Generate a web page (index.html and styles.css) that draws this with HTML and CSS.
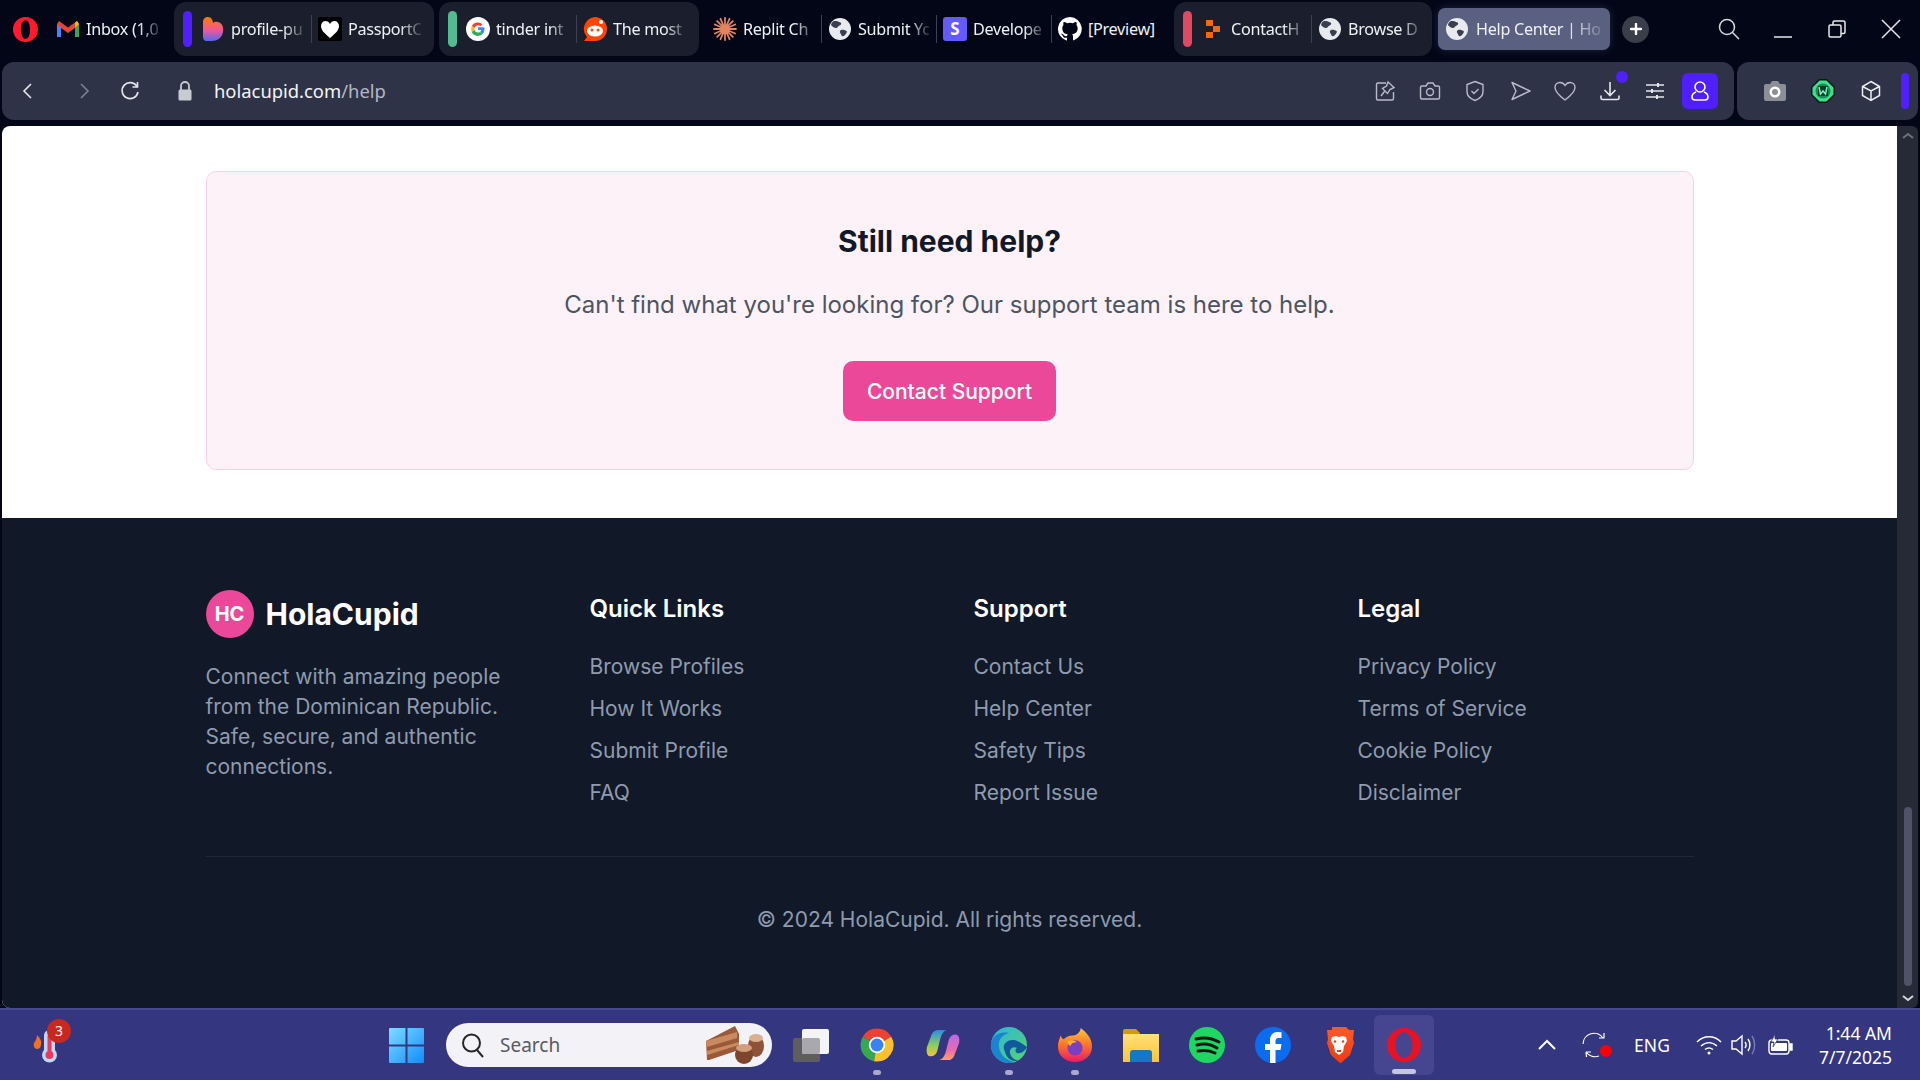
FILE: index.html
```html
<!DOCTYPE html>
<html lang="en">
<head>
<meta charset="utf-8">
<title>Help Center | HolaCupid</title>
<link rel="stylesheet" href="styles.css">
</head>
<body>
<svg class="defs" width="0" height="0">
  <defs>
    <symbol id="globe" viewBox="0 0 24 24">
      <circle cx="12" cy="12" r="11" fill="#e8eaf0"/>
      <path d="M5 4.500c3-1 5 0 7.500 1 1.500.8.500 2.500-1 3-2 .7-1.500 2.500-3.500 2.500S4 9 3 8c.3-1.500 1-2.600 2-3.500zM13 13c2-.8 4 0 5.500 1 1 .8-.5 3-2 4.500-1 1-2.500 1-3 0-.5-1.500-1-2-1.500-3-.3-1 0-2 1-2.500z" fill="#3a3f4f"/>
    </symbol>
    <linearGradient id="gSlack" x1="0" y1="0" x2="0" y2="1"><stop offset="0" stop-color="#ff7a00"/><stop offset=".55" stop-color="#f0569a"/><stop offset="1" stop-color="#4f6bf0"/></linearGradient>
    <linearGradient id="gWin" x1="0" y1="0" x2="1" y2="1"><stop offset="0" stop-color="#7fdcff"/><stop offset="1" stop-color="#0f8cff"/></linearGradient>
    <linearGradient id="gEdge" x1="0" y1="0" x2="1" y2="1"><stop offset="0" stop-color="#2bb6dd"/><stop offset="1" stop-color="#58d46a"/></linearGradient>
    <linearGradient id="gFire" x1="0" y1="0" x2="0" y2="1"><stop offset="0" stop-color="#ffc83a"/><stop offset=".55" stop-color="#ff6a2a"/><stop offset="1" stop-color="#e8186e"/></linearGradient>
    <linearGradient id="gCopA" x1="0" y1="0" x2="0" y2="1"><stop offset="0" stop-color="#2a8bea"/><stop offset=".6" stop-color="#8fd05a"/><stop offset="1" stop-color="#f5c22e"/></linearGradient>
    <linearGradient id="gCopB" x1="0" y1="0" x2="0" y2="1"><stop offset="0" stop-color="#b36be8"/><stop offset=".6" stop-color="#e96ab0"/><stop offset="1" stop-color="#ffa25a"/></linearGradient>
    <linearGradient id="gFold" x1="0" y1="0" x2="0" y2="1"><stop offset="0" stop-color="#ffe07a"/><stop offset="1" stop-color="#fbc530"/></linearGradient>
    <linearGradient id="gBrave" x1="0" y1="0" x2="0" y2="1"><stop offset="0" stop-color="#ff5a2a"/><stop offset="1" stop-color="#f03a10"/></linearGradient>
  </defs>
</svg>

<header class="tabbar">
  <svg class="opera-logo" width="25" height="25" viewBox="0 0 24 24"><path fill-rule="evenodd" d="M12 0C5 0 0 5.400 0 12s5 12 12 12 12-5.400 12-12S19 0 12 0zm0 3c2.700 0 4.400 4 4.400 9S14.700 21 12 21s-4.400-4-4.400-9S9.300 3 12 3z" fill="#ff1b2d"/></svg>
  <div class="tab tab-inbox">
    <svg class="fav" width="22" height="16" viewBox="0 0 22 16"><path d="M0 3v13h4V7l7 5 7-5v9h4V3l-2-3-9 6.500L2 0z" fill="#ea4335"/><path d="M0 3v13h4V7z" fill="#4285f4"/><path d="M18 7v9h4V3z" fill="#34a853"/><path d="M22 3l-2-3-2 1.500V7z" fill="#fbbc04"/></svg>
    <span class="tab-text">Inbox (1,0</span>
  </div>

  <div class="group">
    <i class="pill pill-violet"></i>
    <div class="tab">
      <svg class="fav" width="24" height="24" viewBox="0 0 24 24"><path d="M2 5c0-3 2-5 5-5s5 3 5 6c1-1 3-1.500 5-1 4 1 6 5 5 10-1 6-6 9-11 9H6c-3 0-4-2-4-5z" fill="url(#gSlack)"/></svg>
      <span class="tab-text">profile-pu</span>
    </div>
    <i class="sep"></i>
    <div class="tab">
      <svg class="fav" width="24" height="24" viewBox="0 0 24 24"><rect width="24" height="24" rx="2" fill="#000"/><path d="M12 21C6 16 3 13 3 9c0-3 2-5 4.500-5 2 0 3.500 1 4.500 3 1-2 2.500-3 4.500-3C19 4 21 6 21 9c0 4-3 7-9 12z" fill="#fff"/></svg>
      <span class="tab-text">PassportC</span>
    </div>
  </div>

  <div class="group">
    <i class="pill pill-green"></i>
    <div class="tab">
      <svg class="fav" width="24" height="24" viewBox="0 0 24 24"><circle cx="12" cy="12" r="12" fill="#fff"/><path d="M12 5.500a6.500 6.500 0 0 1 4.400 1.700l-2 2A3.700 3.700 0 0 0 8.500 11L5.800 9A6.500 6.500 0 0 1 12 5.500z" fill="#ea4335"/><path d="M5.800 9l2.700 2a3.800 3.800 0 0 0 0 2.200L5.800 15a6.800 6.800 0 0 1 0-6z" fill="#fbbc04"/><path d="M5.800 15l2.700-1.900A3.700 3.700 0 0 0 14 14.900l2.500 2A6.500 6.500 0 0 1 5.800 15z" fill="#34a853"/><path d="M18.500 12c0 2-.8 3.700-2 4.900l-2.500-2c.7-.5 1.100-1.100 1.300-1.900H12v-2.700h6.300c.1.500.2 1.100.2 1.700z" fill="#4285f4"/></svg>
      <span class="tab-text">tinder int</span>
    </div>
    <i class="sep"></i>
    <div class="tab">
      <svg class="fav" width="24" height="24" viewBox="0 0 24 24"><path d="M12 0a12 12 0 0 1 12 12 12 12 0 0 1-12 12H1l3-4A12 12 0 0 1 12 0z" fill="#ff4500"/><ellipse cx="12" cy="14" rx="8" ry="5.500" fill="#fff"/><circle cx="9" cy="13" r="1.500" fill="#ff4500"/><circle cx="15" cy="13" r="1.500" fill="#ff4500"/><circle cx="18" cy="5" r="2" fill="#fff"/></svg>
      <span class="tab-text">The most</span>
    </div>
  </div>

  <div class="loose">
    <div class="tab tab-s">
      <svg class="fav" width="24" height="24" viewBox="0 0 24 24"><g stroke="#e2855f" stroke-width="1.800" stroke-linecap="round"><path d="M12 1v22M1 12h22M4.200 4.200l15.600 15.600M19.800 4.200L4.200 19.800M7.500 1.800l9 20.400M16.500 1.800l-9 20.400M1.800 7.500l20.400 9M22.200 7.500l-20.400 9"/></g></svg>
      <span class="tab-text">Replit Ch</span>
    </div>
    <i class="sep"></i>
    <div class="tab tab-s">
      <svg class="fav" width="24" height="24"><use href="#globe"/></svg>
      <span class="tab-text">Submit Yo</span>
    </div>
    <i class="sep"></i>
    <div class="tab tab-s">
      <span class="stripe">S</span>
      <span class="tab-text">Develope</span>
    </div>
    <i class="sep"></i>
    <div class="tab tab-s">
      <svg class="fav" width="24" height="24" viewBox="0 0 16 16"><path fill="#fff" d="M8 0a8 8 0 0 0-2.500 15.600c.4.100.5-.2.500-.4v-1.400c-2.200.5-2.700-1-2.700-1-.4-.9-.9-1.200-.9-1.200-.7-.5.100-.5.100-.5.800.100 1.200.8 1.200.8.700 1.200 1.900.9 2.300.7.100-.5.300-.9.500-1.100-1.800-.2-3.600-.9-3.600-4 0-.9.300-1.600.8-2.100-.1-.2-.4-1 .1-2.100 0 0 .7-.2 2.200.8a7.500 7.500 0 0 1 4 0c1.500-1 2.200-.8 2.200-.8.400 1.100.2 1.900.1 2.100.5.600.8 1.300.8 2.100 0 3.100-1.900 3.700-3.700 3.900.3.300.6.800.6 1.500v2.200c0 .2.100.5.600.4A8 8 0 0 0 8 0z"/></svg>
      <span class="tab-text tab-text-full">[Preview]</span>
    </div>
  </div>

  <div class="group group-last">
    <i class="pill pill-red"></i>
    <div class="tab">
      <svg class="fav" width="24" height="24" viewBox="0 0 24 24"><path d="M5 3h7v6H5zM12 9h7v6h-7zM5 15h7v6H5z" fill="#f26a0d"/></svg>
      <span class="tab-text">ContactH</span>
    </div>
    <i class="sep"></i>
    <div class="tab">
      <svg class="fav" width="24" height="24"><use href="#globe"/></svg>
      <span class="tab-text">Browse D</span>
    </div>
  </div>

  <div class="tab-active">
    <svg class="fav" width="24" height="24"><use href="#globe"/></svg>
    <span class="tab-text">Help Center | Ho</span>
  </div>
  <div class="plus"><svg width="12" height="12" viewBox="0 0 12 12"><path d="M6 1v10M1 6h10" stroke="#fff" stroke-width="2.400" stroke-linecap="round"/></svg></div>

  <div class="winctl">
    <svg width="24" height="24" viewBox="0 0 24 24" fill="none" stroke="#d8d9de" stroke-width="1.500"><circle cx="10" cy="10" r="7.500"/><path d="M15.500 15.500L22 22"/></svg>
    <svg width="24" height="24" viewBox="0 0 24 24" fill="none" stroke="#e8e8ec" stroke-width="1.500"><path d="M3 20h18"/></svg>
    <svg width="24" height="24" viewBox="0 0 24 24" fill="none" stroke="#e8e8ec" stroke-width="1.500"><rect x="4" y="8" width="12" height="12" rx="1.500"/><path d="M8 8V5.500C8 4.700 8.700 4 9.500 4h9c.8 0 1.500.7 1.500 1.500V15c0 .8-.7 1.500-1.500 1.500H16"/></svg>
    <svg width="24" height="24" viewBox="0 0 24 24" fill="none" stroke="#e8e8ec" stroke-width="1.500"><path d="M3 3l18 18M21 3L3 21"/></svg>
  </div>
</header>

<div class="addr-row">
  <div class="addr">
    <svg class="nav nav-back" width="24" height="24" viewBox="0 0 24 24" fill="none" stroke="#e6e7ec" stroke-width="1.600"><path d="M15 5l-7 7 7 7"/></svg>
    <svg class="nav nav-fwd" width="24" height="24" viewBox="0 0 24 24" fill="none" stroke="#7d8193" stroke-width="1.600"><path d="M9 5l7 7-7 7"/></svg>
    <svg class="nav nav-reload" width="24" height="24" viewBox="0 0 24 24" fill="none" stroke="#e6e7ec" stroke-width="1.600"><path d="M19 7.500A8 8 0 1 0 20 13"/><path d="M19.500 3v5h-5"/></svg>
    <svg class="nav nav-lock" width="24" height="24" viewBox="0 0 24 24"><path d="M8 11V7a4 4 0 0 1 8 0v4" fill="none" stroke="#c9cbd2" stroke-width="1.800"/><rect x="5.500" y="10.500" width="13" height="11" rx="1.500" fill="#c9cbd2"/></svg>
    <div class="url">holacupid.com<span class="url-path">/help</span></div>
    <div class="actions">
      <svg width="24" height="24" viewBox="0 0 24 24" fill="none" stroke="#b9bcc8" stroke-width="1.400"><path d="M13 4H5a1.500 1.500 0 0 0-1.500 1.500v14A1.500 1.500 0 0 0 5 21h14a1.500 1.500 0 0 0 1.500-1.500V13"/><path d="M15 3l6 5.500-4 2-2.500 4-5-5 4-2.500zM11.500 12.500L8 17"/></svg>
      <svg width="24" height="24" viewBox="0 0 24 24" fill="none" stroke="#b9bcc8" stroke-width="1.400"><path d="M4 7h4l2-3h5l2 3h3a1.500 1.500 0 0 1 1.500 1.500v10A1.500 1.500 0 0 1 20 20H4a1.500 1.500 0 0 1-1.500-1.500v-10A1.500 1.500 0 0 1 4 7z"/><circle cx="12" cy="13" r="3.500"/></svg>
      <svg width="24" height="24" viewBox="0 0 24 24" fill="none" stroke="#b9bcc8" stroke-width="1.400"><path d="M12 2.500l8 3v7c0 4.500-3.500 7.500-8 9-4.500-1.500-8-4.500-8-9v-7z"/><path d="M8.500 12l2.500 2.500 4.500-4.500"/></svg>
      <svg width="24" height="24" viewBox="0 0 24 24" fill="none" stroke="#b9bcc8" stroke-width="1.400"><path d="M4 3.500L22 12 4 20.500 8 12z" stroke-linejoin="round"/></svg>
      <svg width="24" height="24" viewBox="0 0 24 24" fill="none" stroke="#b9bcc8" stroke-width="1.400"><path d="M12 21C6 16.500 2 13 2 8.500 2 5.500 4.300 3.500 7 3.500c2 0 3.800 1 5 3 1.200-2 3-3 5-3 2.700 0 5 2 5 5 0 4.500-4 8-10 12.500z"/></svg>
      <span class="dl"><svg width="24" height="24" viewBox="0 0 24 24" fill="none" stroke="#e6e7ec" stroke-width="1.600"><path d="M12 3v13M6.500 11l5.500 5.500 5.500-5.500M3 16.500V19a1.500 1.500 0 0 0 1.500 1.500h15A1.500 1.500 0 0 0 21 19v-2.500"/></svg><i class="dl-dot"></i></span>
      <svg width="24" height="24" viewBox="0 0 24 24" fill="none" stroke="#e6e7ec" stroke-width="1.500"><path d="M3 6h18M3 12h18M3 18h18"/><path d="M15 4v4M9 10v4M14 16v4" stroke-width="2"/></svg>
    </div>
    <div class="profile"><svg width="24" height="24" viewBox="0 0 24 24" fill="none" stroke="#fff" stroke-width="1.600"><circle cx="12" cy="8" r="5"/><path d="M8 13c-3 1-4 3-4 5 0 2 1.500 3 3 3h10c1.500 0 3-1 3-3 0-2-1-4-4-5"/></svg></div>
  </div>
  <div class="side">
    <span class="side-slot"><svg width="24" height="24" viewBox="0 0 24 24"><path d="M3 5h4l2-3h6l2 3h4a2 2 0 0 1 2 2v13a2 2 0 0 1-2 2H3a2 2 0 0 1-2-2V7a2 2 0 0 1 2-2z" fill="#8d8f96"/><circle cx="12" cy="13" r="5.500" fill="#fff"/><circle cx="12" cy="13" r="3" fill="#8d8f96"/></svg></span>
    <span class="side-slot"><svg width="24" height="24" viewBox="0 0 24 24"><path d="M8 0h8l8 8v8l-8 8H8l-8-8V8z" fill="#0d1b16"/><path d="M8.600 1.500h6.800l7.100 7.100v6.800l-7.100 7.100H8.600l-7.100-7.100V8.600z" fill="#3fe08a"/><circle cx="12" cy="12" r="7.500" fill="#1a8c58"/><rect x="7" y="7" width="10" height="10" fill="#0d3b2a"/><path d="M8 8l1.500 7 2.500-3 2.500 3L16 8" fill="none" stroke="#7ff0b8" stroke-width="1.500"/></svg></span>
    <span class="side-slot"><svg width="24" height="24" viewBox="0 0 24 24" fill="none" stroke="#eceef2" stroke-width="1.500"><path d="M12 2.500l8.500 5v9L12 21.500l-8.500-5v-9zM3.500 7.500L12 12l8.500-4.500M12 12v9.500"/></svg></span>
    <i class="side-pill"></i>
  </div>
</div>

<div class="viewport">
  <div class="page">
    <main class="content">
      <section class="card">
        <h2 class="card-title">Still need help?</h2>
        <p class="card-text">Can't find what you're looking for? Our support team is here to help.</p>
        <a class="card-btn">Contact Support</a>
      </section>
    </main>
    <footer class="footer">
      <div class="footer-inner">
        <div class="footer-grid">
          <div>
            <div class="brand"><span class="brand-mark">HC</span><span class="brand-name">HolaCupid</span></div>
            <p class="brand-text">Connect with amazing people from the Dominican Republic. Safe, secure, and authentic connections.</p>
          </div>
          <div>
            <h3 class="col-title">Quick Links</h3>
            <ul class="links"><li>Browse Profiles</li><li>How It Works</li><li>Submit Profile</li><li>FAQ</li></ul>
          </div>
          <div>
            <h3 class="col-title">Support</h3>
            <ul class="links"><li>Contact Us</li><li>Help Center</li><li>Safety Tips</li><li>Report Issue</li></ul>
          </div>
          <div>
            <h3 class="col-title">Legal</h3>
            <ul class="links"><li>Privacy Policy</li><li>Terms of Service</li><li>Cookie Policy</li><li>Disclaimer</li></ul>
          </div>
        </div>
        <div class="copyright">© 2024 HolaCupid. All rights reserved.</div>
      </div>
    </footer>
  </div>
  <aside class="scrollbar">
    <svg width="12" height="8" viewBox="0 0 12 8" fill="none" stroke="#6c7080" stroke-width="2"><path d="M1 6l5-4 5 4"/></svg>
    <i class="thumb"></i>
    <svg width="12" height="8" viewBox="0 0 12 8" fill="none" stroke="#d5d6dc" stroke-width="2"><path d="M1 2l5 4 5-4"/></svg>
  </aside>
</div>

<footer class="taskbar">
  <div class="weather">
    <svg width="30" height="46" viewBox="0 0 30 46"><path d="M4 21c2-3 3-5 3-8 3 3 5 6 4 10-.5 3-2 4-4 4s-4-3-3-6z" fill="#f2701f"/><rect x="14" y="8" width="11" height="26" rx="5.500" fill="#bcd8f5"/><circle cx="19.500" cy="33" r="7.500" fill="#bcd8f5"/><rect x="17.500" y="14" width="4" height="18" fill="#e8395c"/><circle cx="19.500" cy="33" r="4" fill="#e8395c"/></svg>
    <span class="weather-badge">3</span>
  </div>
  <svg class="winlogo" width="35" height="35" viewBox="0 0 35 35"><path d="M1 0h15.500v16.500H0V1a1 1 0 0 1 1-1zM18.500 0H34a1 1 0 0 1 1 1v15.500H18.500zM0 18.500h16.500V35H1a1 1 0 0 1-1-1zM18.500 18.500H35V34a1 1 0 0 1-1 1H18.500z" fill="url(#gWin)"/></svg>
  <div class="search">
    <svg width="24" height="26" viewBox="0 0 24 26" fill="none" stroke="#26262a" stroke-width="2"><circle cx="10.500" cy="11" r="8.500"/><path d="M16 18l6 7"/></svg>
    <span class="search-label">Search</span>
    <svg class="cake" width="60" height="38" viewBox="0 0 60 38"><path d="M0 15L29 0l4 8v16L3 34H1z" fill="#9a5a3a"/><path d="M0 15l31-9v6L1 21zM1 25l32-9v3L1 29z" fill="#c98a60"/><ellipse cx="50" cy="20" rx="8" ry="11" fill="#8e5236"/><ellipse cx="50" cy="12" rx="7" ry="4" fill="#d9b090"/><ellipse cx="38" cy="29" rx="9" ry="9" fill="#7d452c"/><ellipse cx="38" cy="22" rx="8" ry="4" fill="#cfa080"/></svg>
  </div>
  <svg class="taskview" width="37" height="33" viewBox="0 0 37 33"><rect x="0" y="9" width="27" height="24" rx="2" fill="#5d5d62"/><rect x="9" y="0" width="27" height="25" rx="2" fill="#f4f4f6"/><rect x="9" y="9" width="18" height="16" rx="2" fill="#a8a8ad"/></svg>
  <div class="apps">
    <span class="app app-on"><svg width="36" height="36" viewBox="0 0 24 24"><path d="M12 12L21.530 6.500A11 11 0 0 0 2.470 6.500z" fill="#ea4335"/><path d="M12 12L2.470 6.500A11 11 0 0 0 10 22.800z" fill="#34a853"/><path d="M12 12L10 22.800A11 11 0 0 0 21.530 6.500z" fill="#fbc02d"/><circle cx="12" cy="12" r="5.500" fill="#fff"/><circle cx="12" cy="12" r="4.300" fill="#3b82f0"/></svg></span>
    <span class="app"><svg width="34" height="34" viewBox="0 0 36 36"><path d="M23 34H14c4-1 6-5 7-9l3-12c1-4 4-6 7-6 4 0 5 5 4 9l-5 13c-1 3-4 5-7 5z" fill="url(#gCopB)"/><path d="M13 2h9c-4 1-6 6-7 10l-3 12c-1 4-4 6-7 6-4 0-5-5-4-10L6 7c1-3 4-5 7-5z" fill="url(#gCopA)"/></svg></span>
    <span class="app app-on"><svg width="36" height="36" viewBox="0 0 36 36"><circle cx="18" cy="18" r="18" fill="url(#gEdge)"/><path d="M0 18C0 8 10 4 18 6c-8 2-11 8-10 14 1 8 8 14 16 15-2 1-4 1-6 1C8 36 0 28 0 18z" fill="#1a84cf"/><path d="M14 25c-4-7 2-13 9-12 6 1 10 5 13 7-2 4-6 7-10 6-2-1-2-4 0-5-4-2-8 1-7 5 1 5 6 8 9 7-6 3-12-1-14-8z" fill="#12589f"/></svg></span>
    <span class="app app-on"><svg width="34" height="36" viewBox="0 0 36 36"><path d="M24 0c6 5 12 10 12 20 0 9-8 16-18 16S0 29 0 20C0 15 2 10 3 8c.5 2 1 3 3 4 3-3 7-4 9-4C20 8 24 4 24 0z" fill="url(#gFire)"/><circle cx="18" cy="21" r="8" fill="#7b3fc4"/><path d="M10 14c4-2 8-1 10 1-3 0-6 1-7 4-2-1-3-3-3-5z" fill="#ffb02a"/></svg></span>
    <span class="app"><svg width="36" height="33" viewBox="0 0 36 33"><path d="M0 2a2 2 0 0 1 2-2h11l4 4v2H0z" fill="#d49b00"/><path d="M0 5h36v28H0z" fill="url(#gFold)"/><path d="M7 33v-9a3 3 0 0 1 3-3h16a3 3 0 0 1 3 3v9z" fill="#1577c8"/></svg></span>
    <span class="app"><svg width="36" height="36" viewBox="0 0 36 36"><circle cx="18" cy="18" r="18" fill="#1ed760"/><path d="M7 12c8-2 16-1 23 3M8 18c7-2 14-1 20 3M9 24c6-1 11-1 17 2" fill="none" stroke="#14141a" stroke-width="3" stroke-linecap="round"/></svg></span>
    <span class="app"><svg width="36" height="36" viewBox="0 0 36 36"><circle cx="18" cy="18" r="18" fill="#0b6cf0"/><path d="M15 36V23h-5v-6h5v-4c0-5 3-8 7.500-8l4 .3V11h-3c-2 0-3 1-3 3v3h6l-1 6h-5v13z" fill="#fff"/></svg></span>
    <span class="app"><svg width="30" height="36" viewBox="0 0 30 36"><path d="M8 0h14l3 3 5 0-1 9 1 4-4 12-9 8-1 0-9-8-4-12 1-4-1-9 5 0z" fill="url(#gBrave)"/><path d="M8 10l4-1 3 1 3-1 4 1 1 4-3 5-1 6-4 3-4-3-1-6-3-5z" fill="#fff"/><path d="M12 15l-2-1M18 15l2-1M13 24h4" stroke="#f03a10" stroke-width="2"/></svg></span>
    <span class="app app-active"><svg width="34" height="36" viewBox="0 0 24 24"><path fill-rule="evenodd" d="M12 0C5 0 0 5.400 0 12s5 12 12 12 12-5.400 12-12S19 0 12 0zm0 3c3.500 0 6 4 6 9s-2.500 9-6 9-6-4-6-9 2.500-9 6-9z" fill="#e81224"/></svg></span>
  </div>
  <div class="tray">
    <svg class="tray-chev" width="18" height="12" viewBox="0 0 18 12" fill="none" stroke="#fff" stroke-width="2"><path d="M1 10l8-8 8 8"/></svg>
    <span class="tray-sync"><svg width="26" height="26" viewBox="0 0 26 26" fill="none" stroke="#fff" stroke-width="1.200"><path d="M1 12A11 11 0 0 1 21 6M22 1v5h-5M4 20l.5 5M4 20h5M4 20a11 11 0 0 0 13 4"/></svg><i class="sync-dot"></i></span>
    <span class="tray-eng">ENG</span>
    <svg class="tray-wifi" width="26" height="20" viewBox="0 0 26 20" fill="none" stroke="#fff" stroke-width="1.500"><path d="M1 7c7-7 17-7 24 0M5 11c5-4.500 11-4.500 16 0M9 14.500c2.500-2 5.500-2 8 0"/><circle cx="13" cy="18" r="1.500" fill="#fff" stroke="none"/></svg>
    <svg class="tray-vol" width="26" height="24" viewBox="0 0 26 24" fill="none" stroke="#fff" stroke-width="1.400"><path d="M2 8h4l6-5v18l-6-5H2z"/><path d="M15 9c1.500 2 1.500 4 0 6M18 6c2.500 3.500 2.500 8.500 0 12"/><path d="M22 3c3.500 5 3.500 13 0 18" stroke="#7b7bb5"/></svg>
    <svg class="tray-batt" width="26" height="22" viewBox="0 0 26 22" fill="none" stroke="#fff" stroke-width="1.400"><rect x="1" y="6" width="20" height="14" rx="3"/><rect x="3" y="9" width="16" height="8" rx="1" fill="#fff" stroke="none"/><path d="M22 10h2v6h-2z" fill="#fff"/><path d="M7 0L3 8h3l-1 5 5-8H7z" fill="#fff" stroke="#353680" stroke-width=".8"/></svg>
    <div class="clock"><div>1:44 AM</div><div>7/7/2025</div></div>
  </div>
</footer>
</body>
</html>
```

FILE: styles.css
```css
* { box-sizing: border-box; }
html, body { margin: 0; padding: 0; height: 100%; }
body {
  width: 1920px;
  height: 1080px;
  overflow: hidden;
  display: flex;
  flex-direction: column;
  background: #030617;
  font-family: "Noto Sans", "Open Sans", sans-serif;
}
.defs { position: absolute; }
svg { display: block; flex: none; }

/* tab strip */
.tabbar {
  height: 62px;
  flex: none;
  display: flex;
  align-items: center;
  padding: 0 0 4px 13px;
  color: #f0f1f4;
  font-size: 16.200px;
}
.opera-logo { margin-right: 19px; }
.tab { width: 103px; flex: none; display: flex; align-items: center; gap: 6px; }
.tab-inbox { width: 103px; gap: 7px; margin-right: 14px; }
.tab-s { width: 101px; }
.fav { flex: none; }
.tab-text {
  flex: 1;
  min-width: 0;
  overflow: hidden;
  white-space: nowrap;
  letter-spacing: -.3px;
  -webkit-mask-image: linear-gradient(90deg, #000 72%, rgba(0, 0, 0, .15) 100%);
  mask-image: linear-gradient(90deg, #000 72%, rgba(0, 0, 0, .15) 100%);
}
.tab-text-full { -webkit-mask-image: none; mask-image: none; }
.group {
  height: 54px;
  flex: none;
  display: flex;
  align-items: center;
  padding: 0 13px 0 9px;
  margin-right: 5px;
  background: #1b1e2c;
  border-radius: 12px;
}
.pill { width: 9px; height: 36px; border-radius: 5px; margin-right: 9px; flex: none; }
.pill-violet { background: #4f1fff; }
.pill-green { background: #53bb8f; }
.pill-red { background: #e04a5f; }
.sep { width: 1px; height: 28px; background: #3e4150; margin: 0 6px 0 7px; flex: none; }
.loose { display: flex; align-items: center; margin-left: 9px; margin-right: 15px; }
.group-last { padding-right: 11px; margin-right: 6px; }
.stripe {
  width: 24px;
  height: 24px;
  flex: none;
  border-radius: 3px;
  background: #635bff;
  color: #fff;
  font: 700 17px/24px "Noto Sans", sans-serif;
  text-align: center;
}
.tab-active {
  width: 172px;
  height: 42px;
  flex: none;
  display: flex;
  align-items: center;
  gap: 7px;
  padding: 0 7px;
  border-radius: 7px;
  background: #5a6080;
  box-shadow: 0 0 10px rgba(120, 130, 170, .25);
}
.plus {
  width: 27px;
  height: 27px;
  margin-left: 12px;
  flex: none;
  display: flex;
  align-items: center;
  justify-content: center;
  border-radius: 50%;
  background: #3a3d4a;
}
.winctl { margin: 0 17px 0 auto; display: flex; gap: 30px; }

/* address row */
.addr-row { height: 58px; flex: none; display: flex; gap: 3px; padding: 0 2px; }
.addr {
  width: 1732px;
  display: flex;
  align-items: center;
  padding: 0 16px 0 14px;
  background: #2e3348;
  border-radius: 12px;
}
.nav-fwd { margin-left: 32px; }
.nav-reload { margin-left: 22px; }
.nav-lock { margin-left: 31px; }
.url { margin-left: 17px; padding-bottom: 2px; font-size: 18.400px; color: #f3f4f7; }
.url-path { color: #b4b7c4; }
.actions { margin-left: auto; display: flex; align-items: center; gap: 21px; margin-right: 15px; }
.dl { position: relative; display: block; }
.dl-dot { position: absolute; top: -8px; right: -6px; width: 12px; height: 12px; border-radius: 50%; background: #4f1fff; }
.profile {
  width: 36px;
  height: 36px;
  display: flex;
  align-items: center;
  justify-content: center;
  border-radius: 6px;
  background: #4f1fff;
}
.side {
  flex: 1;
  display: flex;
  align-items: center;
  padding-left: 14px;
  background: #2e3348;
  border-radius: 12px;
}
.side-slot { width: 48px; display: flex; justify-content: center; }
.side-pill { width: 8px; height: 36px; margin-left: 6px; border-radius: 4px; background: #4f1fff; }

/* viewport */
.viewport { flex: 1; min-height: 0; margin-top: 6px; display: flex; padding: 0 2px; }
.page {
  width: 1895px;
  flex: none;
  overflow: hidden;
  background: #fff;
  border-radius: 8px 0 0 8px;
  font-family: Inter, sans-serif;
}
.content { padding: 45px 0 48px; }
.card {
  width: 1488px;
  margin: 0 auto;
  height: 299px;
  padding-top: 49px;
  border: 1px solid #fbcfe8;
  border-radius: 10px;
  background: #fdf2f8;
  display: flex;
  flex-direction: column;
  align-items: center;
}
.card-title { margin: 0; font-size: 30px; line-height: 40px; font-weight: 700; color: #111827; }
.card-text { margin: 26px 0 0; font-size: 24px; line-height: 36px; color: #4b5563; }
.card-btn {
  margin-top: 38px;
  width: 213px;
  height: 60px;
  display: flex;
  align-items: center;
  justify-content: center;
  border-radius: 10px;
  background: #ec4899;
  color: #fff;
  font-size: 21px;
  font-weight: 500;
}
.footer { background: #111827; height: 490px; padding-top: 72px; color: #8f9bae; }
.footer-inner { width: 1488px; margin: 0 auto; }
.footer-grid {
  display: grid;
  grid-template-columns: repeat(4, 1fr);
  column-gap: 48px;
  padding-bottom: 48px;
  border-bottom: 1px solid #1f2937;
}
.brand { display: flex; align-items: center; gap: 12px; height: 48px; margin-bottom: 24px; }
.brand-mark {
  width: 48px;
  height: 48px;
  display: flex;
  align-items: center;
  justify-content: center;
  border-radius: 50%;
  background: #ec4899;
  color: #fff;
  font-size: 20px;
  font-weight: 700;
}
.brand-name { color: #fff; font-size: 30px; font-weight: 700; }
.brand-text { margin: 0; font-size: 21px; line-height: 30px; }
.col-title { margin: 0 0 24px; font-size: 24px; line-height: 38px; font-weight: 600; color: #fff; }
.links { margin: 0; padding: 0; list-style: none; display: flex; flex-direction: column; gap: 12px; font-size: 21px; line-height: 30px; }
.copyright { padding-top: 48px; text-align: center; font-size: 21px; line-height: 30px; }

/* scrollbar */
.scrollbar {
  width: 21px;
  flex: none;
  display: flex;
  flex-direction: column;
  align-items: center;
  padding: 6px 0 6px;
  background: #262a36;
  border-radius: 0 6px 6px 0;
}
.thumb { margin-top: auto; margin-bottom: 8px; width: 8px; height: 179px; border-radius: 4px; background: #4f5268; }

/* taskbar */
.taskbar {
  height: 72px;
  flex: none;
  display: flex;
  align-items: center;
  padding-left: 30px;
  background: #353680;
  border-top: 2px solid #47488f;
  color: #fff;
}
.weather { position: relative; width: 30px; }
.weather-badge {
  position: absolute;
  top: -3px;
  right: -11px;
  width: 24px;
  height: 24px;
  border-radius: 50%;
  background: #c8281e;
  font-size: 14px;
  line-height: 24px;
  text-align: center;
}
.winlogo { margin-left: 329px; }
.search {
  width: 326px;
  height: 44px;
  margin-left: 22px;
  display: flex;
  align-items: center;
  padding: 0 6px 0 15px;
  border-radius: 22px;
  background: #f3f2f7;
  color: #5a5a60;
}
.search-label { margin-left: 15px; font-size: 19px; flex: 1; }
.taskview { margin-left: 21px; }
.apps { display: flex; margin-left: 14px; }
.app { position: relative; width: 66px; height: 60px; display: flex; align-items: center; justify-content: center; }
.app-on::after {
  content: "";
  position: absolute;
  left: 29px;
  bottom: 0;
  width: 8px;
  height: 5px;
  border-radius: 3px;
  background: #a8a8d0;
}
.app-active { width: 60px; margin: 0 2px 0 2px; border-radius: 6px; background: #45468f; }
.app-active::after {
  content: "";
  position: absolute;
  left: 18px;
  bottom: 1px;
  width: 24px;
  height: 5px;
  border-radius: 3px;
  background: #c5c5e4;
}
.tray { margin-left: auto; margin-right: 28px; display: flex; align-items: center; }
.tray-chev { margin-right: 22px; }
.tray-sync { position: relative; width: 34px; margin-right: 15px; display: flex; justify-content: center; }
.sync-dot { position: absolute; top: 13px; right: 0; width: 12px; height: 12px; border-radius: 50%; background: #ff0000; }
.tray-eng { width: 50px; margin-right: 19px; text-align: center; font-size: 17.500px; }
.tray-wifi { margin-right: 8px; }
.tray-vol { margin-right: 12px; }
.tray-batt { margin-right: 18px; }
.clock { text-align: right; font-size: 17.500px; line-height: 24px; white-space: nowrap; width: 80px; }
```
